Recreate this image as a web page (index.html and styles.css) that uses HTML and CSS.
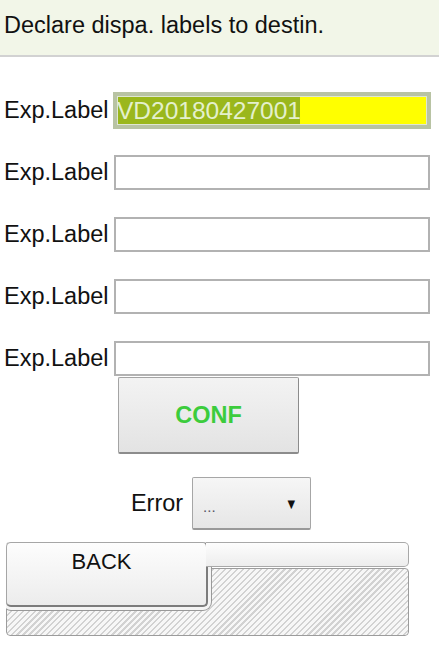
FILE: index.html
```html
<!DOCTYPE html>
<html>
<head>
    <title>Declare labels</title>
    <link rel="stylesheet" href="styles.css">
</head>
<body>

    <div class="header">Declare dispa. labels to destin.</div>

    <div class="form">
        <div class="row">
            <label for="lbl1">Exp.Label</label>
            <input type="text" id="lbl1" class="label-input active" value="VD20180427001">
        </div>
        <div class="row">
            <label for="lbl2">Exp.Label</label>
            <input type="text" id="lbl2" class="label-input">
        </div>
        <div class="row">
            <label for="lbl3">Exp.Label</label>
            <input type="text" id="lbl3" class="label-input">
        </div>
        <div class="row">
            <label for="lbl4">Exp.Label</label>
            <input type="text" id="lbl4" class="label-input">
        </div>
        <div class="row">
            <label for="lbl5">Exp.Label</label>
            <input type="text" id="lbl5" class="label-input">
        </div>
    </div>

    <div class="actions">
        <button class="conf-btn">CONF</button>
    </div>

    <div class="error-row">
        <span class="error-label">Error</span>
        <div class="select">
            <span class="select-value">...</span>
            <span class="select-arrow">&#9660;</span>
        </div>
    </div>

    <div class="nav">
        <button class="back-btn">BACK</button>
        <div class="nav-bar"></div>
        <div class="nav-body"></div>
    </div>

</body>
</html>
```
FILE: styles.css
```css
body {
    margin: 0;
    padding: 0;
    font-family: "Liberation Sans", Arial, sans-serif;
    font-size: 23.5px;
    color: #111;
    background: #fff;
}

.header {
    height: 43px;
    padding: 12px 0 0 4px;
    line-height: 27px;
    background-color: #f2f6e8;
    border-bottom: 2px solid #d2d2d2;
}

.form {
    display: flex;
    flex-direction: column;
    gap: 27px;
    margin-top: 36px;
    padding-left: 4px;
}

.row {
    display: flex;
    align-items: center;
    height: 35px;
}

.row label {
    width: 110px;
    white-space: nowrap;
}

.label-input {
    box-sizing: border-box;
    width: 316px;
    height: 35px;
    margin: 0;
    padding: 0 2px;
    border: 2px solid #b2b2b2;
    border-radius: 0;
    font-family: inherit;
    font-size: 24.5px;
    color: #111;
    background: #fff;
    outline: none;
}

.label-input.active {
    width: 318px;
    height: 37px;
    margin-left: -1px;
    padding: 0;
    border: 4px solid #b8c3a3;
    box-shadow: inset 0 0 0 1px #dfe6d2;
    color: #e4f0cc;
    background: linear-gradient(to right, #9ab71c 0 183px, #ffff00 183px);
}

.actions {
    padding-left: 118px;
    margin-top: 1px;
}

.conf-btn {
    width: 181px;
    height: 77px;
    border: 1px solid #a4a4a4;
    border-right-color: #8c8c8c;
    border-bottom: 2px solid #8c8c8c;
    border-radius: 2px;
    background: linear-gradient(#f3f3f3, #e3e3e3);
    font-family: inherit;
    font-size: 23.5px;
    font-weight: bold;
    color: #3ccc3c;
    cursor: pointer;
}

.error-row {
    display: flex;
    align-items: center;
    justify-content: center;
    gap: 9px;
    margin-top: 23px;
    padding-left: 3px;
}

.select {
    box-sizing: border-box;
    display: flex;
    align-items: center;
    justify-content: space-between;
    width: 119px;
    height: 53px;
    padding: 0 11px 0 10px;
    border: 1px solid #a6a6a6;
    border-bottom: 2px solid #999;
    border-radius: 2px;
    background: linear-gradient(#f6f6f6, #e6e6e6);
}

.select-value {
    font-size: 15px;
    color: #556;
    margin-top: 6px;
}

.select-arrow {
    font-size: 15px;
    color: #111;
    transform: scaleX(0.85);
}

.nav {
    position: relative;
    width: 403px;
    margin: 12px 0 0 6px;
    overflow: hidden;
    border-radius: 4px;
}

.nav-bar {
    position: relative;
    z-index: 2;
    box-sizing: border-box;
    height: 25px;
    margin-left: 200px;
    border: 1px solid #a8a8a8;
    border-left: none;
    border-radius: 0 5px 5px 0;
    background: linear-gradient(#fdfdfd, #ededed);
}

.nav-body {
    box-sizing: border-box;
    height: 68px;
    margin-top: 1px;
    border: 1px solid #9c9c9c;
    border-radius: 4px;
    background: repeating-linear-gradient(135deg, #f7f7f7 0 2.6px, #d2d2d2 2.6px 4.2px);
}

.back-btn {
    position: absolute;
    top: 0;
    left: 0;
    z-index: 1;
    box-sizing: border-box;
    display: flex;
    justify-content: center;
    align-items: flex-start;
    width: 202px;
    height: 65px;
    padding: 6px 10px 0 0;
    border: 1px solid #a6a6a6;
    border-right: 2px solid #7c7c7c;
    border-bottom: 2px solid #7c7c7c;
    border-radius: 5px;
    background: linear-gradient(#fdfdfd, #ececec);
    box-shadow: 0 0 0 3px #f4f4f4, 0 0 0 4px #999;
    font-family: inherit;
    font-size: 22px;
    color: #111;
    cursor: pointer;
}
```
